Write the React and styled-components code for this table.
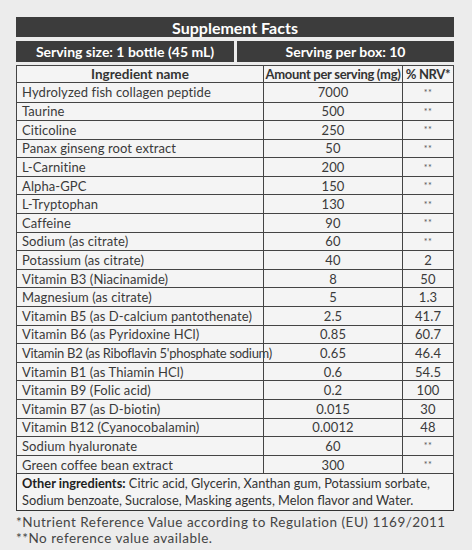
import React from "react";
import styled, { createGlobalStyle } from "styled-components";

const Global = createGlobalStyle`
  html, body { margin: 0; padding: 0; background: #ececec; }
  body { font-family: Lato, "Open Sans", sans-serif; color: #333; }
`;

const Page = styled.div`
  width: 472px;
  height: 550px;
  box-sizing: border-box;
  padding: 17px 18px 0 16px;
  display: flex;
  flex-direction: column;
`;

const Bar = styled.div`
  background: #3c3c3c;
  color: #fff;
  font-weight: 700;
  display: flex;
  align-items: center;
  justify-content: center;
  height: ${(p) => p.$h}px;
  font-size: ${(p) => p.$fs}px;
  letter-spacing: ${(p) => p.$ls || 0}px;
`;

const ServingRow = styled.div`
  display: grid;
  grid-template-columns: 218px 1fr;
  gap: 3px;
  margin-top: 4px;
`;

const Table = styled.table`
  margin-top: 3px;
  width: 100%;
  border-collapse: collapse;
  table-layout: fixed;
  background: #f4f4f4;
  border: 1.5px solid #333;
  font-size: 13px;
`;

const Th = styled.th`
  border: 1px solid #444;
  height: 16px;
  padding: 0;
  font-weight: 700;
  color: #333;
  font-size: ${(p) => p.$fs || 13}px;
  letter-spacing: ${(p) => p.$ls || 0}px;
  line-height: 16px;
  white-space: nowrap;
`;

const Td = styled.td`
  border: 1px solid #444;
  height: ${(p) => p.$h || 17.6}px;
  padding: 0 0 0 5px;
  line-height: 16px;
  color: #3a3a3a;
  white-space: nowrap;
  letter-spacing: ${(p) => p.$ls || 0.1}px;
  text-align: ${(p) => (p.$center ? "center" : "left")};
  ${(p) => p.$center && "padding: 0;"}
`;

const Stars = styled.span`
  font-size: 9px;
  color: #555;
  letter-spacing: 0.5px;
  vertical-align: 1px;
`;

const Other = styled.div`
  border: 1.5px solid #333;
  border-top: none;
  background: #f4f4f4;
  padding: 1px 4px 2px 5px;
  font-size: 12.8px;
  line-height: 16.5px;
  color: #333;
  letter-spacing: 0px;
`;

const Bold = styled.b`
  font-weight: 700;
  color: #222;
`;

const Notes = styled.div`
  margin-top: 3px;
  font-size: 13.5px;
  line-height: 16px;
  color: #444;
  letter-spacing: 0.5px;
`;

const rows = [
  ["Hydrolyzed fish collagen peptide", "7000", "**"],
  ["Taurine", "500", "**"],
  ["Citicoline", "250", "**"],
  ["Panax ginseng root extract", "50", "**"],
  ["L-Carnitine", "200", "**"],
  ["Alpha-GPC", "150", "**"],
  ["L-Tryptophan", "130", "**"],
  ["Caffeine", "90", "**"],
  ["Sodium (as citrate)", "60", "**"],
  ["Potassium (as citrate)", "40", "2"],
  ["Vitamin B3 (Niacinamide)", "8", "50"],
  ["Magnesium (as citrate)", "5", "1.3"],
  ["Vitamin B5 (as D-calcium pantothenate)", "2.5", "41.7"],
  ["Vitamin B6 (as Pyridoxine HCl)", "0.85", "60.7"],
  ["Vitamin B2 (as Riboflavin 5'phosphate sodium)", "0.65", "46.4", -0.3],
  ["Vitamin B1 (as Thiamin HCl)", "0.6", "54.5"],
  ["Vitamin B9 (Folic acid)", "0.2", "100"],
  ["Vitamin B7 (as D-biotin)", "0.015", "30"],
  ["Vitamin B12 (Cyanocobalamin)", "0.0012", "48"],
  ["Sodium hyaluronate", "60", "**"],
  ["Green coffee bean extract", "300", "**"],
];

export default function App() {
  return (
    <>
      <Global />
      <Page>
        <Bar $h={20} $fs={16}>Supplement Facts</Bar>
        <ServingRow>
          <Bar $h={21} $fs={14}>Serving size: 1 bottle (45 mL)</Bar>
          <Bar $h={21} $fs={14}>Serving per box: 10</Bar>
        </ServingRow>
        <Table>
          <colgroup>
            <col style={{ width: "247px" }} />
            <col style={{ width: "139px" }} />
            <col />
          </colgroup>
          <thead>
            <tr>
              <Th $fs={13.5}>Ingredient name</Th>
              <Th $ls={-0.3}>Amount per serving (mg)</Th>
              <Th $ls={-0.3}>% NRV*</Th>
            </tr>
          </thead>
          <tbody>
            {rows.map(([name, amt, nrv, ls], i) => (
              <tr key={name}>
                <Td $h={i === 0 ? 18.5 : 17.6} $ls={ls}>{name}</Td>
                <Td $center>{amt}</Td>
                <Td $center>{nrv === "**" ? <Stars>**</Stars> : nrv}</Td>
              </tr>
            ))}
          </tbody>
        </Table>
        <Other>
          <Bold>Other ingredients:</Bold> Citric acid, Glycerin, Xanthan gum, Potassium sorbate,
          Sodium benzoate, Sucralose, Masking agents, Melon flavor and Water.
        </Other>
        <Notes>
          *Nutrient Reference Value according to Regulation (EU) 1169/2011
          <br />
          **No reference value available.
        </Notes>
      </Page>
    </>
  );
}
